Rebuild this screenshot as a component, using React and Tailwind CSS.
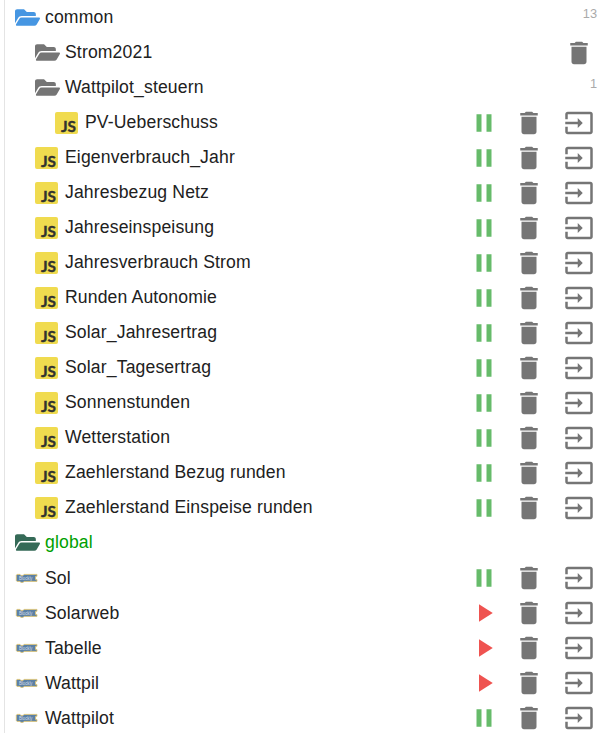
import { FaFolderOpen } from 'react-icons/fa'
import { MdDelete, MdInput, MdPause, MdPlayArrow } from 'react-icons/md'

const items = [
  { type: 'folder', name: 'common', color: 'text-[#4696e2]', depth: 0, count: 13 },
  { type: 'folder', name: 'Strom2021', color: 'text-[#757575]', depth: 1, empty: true },
  { type: 'folder', name: 'Wattpilot_steuern', color: 'text-[#757575]', depth: 1, count: 1 },
  { type: 'js', name: 'PV-Ueberschuss', depth: 2, running: true },
  { type: 'js', name: 'Eigenverbrauch_Jahr', depth: 1, running: true },
  { type: 'js', name: 'Jahresbezug Netz', depth: 1, running: true },
  { type: 'js', name: 'Jahreseinspeisung', depth: 1, running: true },
  { type: 'js', name: 'Jahresverbrauch Strom', depth: 1, running: true },
  { type: 'js', name: 'Runden Autonomie', depth: 1, running: true },
  { type: 'js', name: 'Solar_Jahresertrag', depth: 1, running: true },
  { type: 'js', name: 'Solar_Tagesertrag', depth: 1, running: true },
  { type: 'js', name: 'Sonnenstunden', depth: 1, running: true },
  { type: 'js', name: 'Wetterstation', depth: 1, running: true },
  { type: 'js', name: 'Zaehlerstand Bezug runden', depth: 1, running: true },
  { type: 'js', name: 'Zaehlerstand Einspeise runden', depth: 1, running: true },
  { type: 'folder', name: 'global', color: 'text-[#356a57]', textColor: 'text-[#00a000]', depth: 0 },
  { type: 'blockly', name: 'Sol', depth: 0, running: true },
  { type: 'blockly', name: 'Solarweb', depth: 0, running: false },
  { type: 'blockly', name: 'Tabelle', depth: 0, running: false },
  { type: 'blockly', name: 'Wattpil', depth: 0, running: false },
  { type: 'blockly', name: 'Wattpilot', depth: 0, running: true },
]

const indent = ['pl-[10px]', 'pl-[30px]', 'pl-[50px]']

function JsIcon() {
  return (
    <svg viewBox="0 0 23 22" className="w-[23px] h-[22px] mt-px">
      <rect width="23" height="22" rx="2" fill="#f0db4f" />
      <text x="5.9" y="20.2" textLength="15" lengthAdjust="spacingAndGlyphs" fontFamily="Lato, sans-serif" fontWeight="700" fontSize="14.5" fill="#323330" stroke="#323330" strokeWidth=".4">
        JS
      </text>
    </svg>
  )
}

function BlocklyIcon() {
  return (
    <svg viewBox="0 0 23 10" className="w-[23px] h-[10px] mt-px">
      <path
        d="M2 1.4h3l.9 1h2.2l.9-1h13v1.9h-1.4v3.3H22v1.8H9l-.9 1H5.9l-.9-1H2L1.3 7.500V2.200z"
        fill="#5b80a5"
        stroke="#e3c56c"
        strokeWidth=".8"
      />
      <text x="4" y="6.8" textLength="13.500" lengthAdjust="spacingAndGlyphs" fontFamily="Liberation Sans, sans-serif" fontSize="4.5" fill="#d5dfe8">
        Blockly
      </text>
    </svg>
  )
}

function ItemIcon({ item }) {
  if (item.type === 'js') return <JsIcon />
  if (item.type === 'blockly') return <BlocklyIcon />
  return <FaFolderOpen size={25} className={item.color} />
}

function Actions({ item }) {
  if (item.type === 'folder') {
    return (
      <>
        {item.empty && <MdDelete size={30} className="mr-[18px] text-[#757575]" />}
        {item.count && <span className="mr-[15px] mb-2 text-[12.8px] text-[#aaa]">{item.count}</span>}
      </>
    )
  }
  return (
    <div className="flex items-center mr-[18px] mt-px text-[#757575]">
      {item.running ? (
        <MdPause size={30} className="text-[#66bb6a]" />
      ) : (
        <MdPlayArrow size={30} className="text-[#ef5350]" />
      )}
      <MdDelete size={30} className="ml-[15px]" />
      <MdInput size={30} className="ml-5" />
    </div>
  )
}

function Row({ item }) {
  return (
    <li className={`flex items-center h-[35px] ${indent[item.depth]}`}>
      <div className="w-[30px] shrink-0">
        <ItemIcon item={item} />
      </div>
      <span
        className={`flex-1 text-[17.6px] leading-6 tracking-[0.14px] whitespace-nowrap ${item.textColor || 'text-[#212121]'} ${item.type === 'blockly' ? 'pt-px' : 'pb-[2px]'}`}
      >
        {item.name}
      </span>
      <Actions item={item} />
    </li>
  )
}

export default function App() {
  return (
    <div className="h-[733px] overflow-hidden bg-white pl-1 font-['Liberation_Sans',Arial,sans-serif]">
      <ul className="min-h-full border-l border-[#e4e4e4]">
        {items.map(item => (
          <Row key={item.name} item={item} />
        ))}
      </ul>
    </div>
  )
}
